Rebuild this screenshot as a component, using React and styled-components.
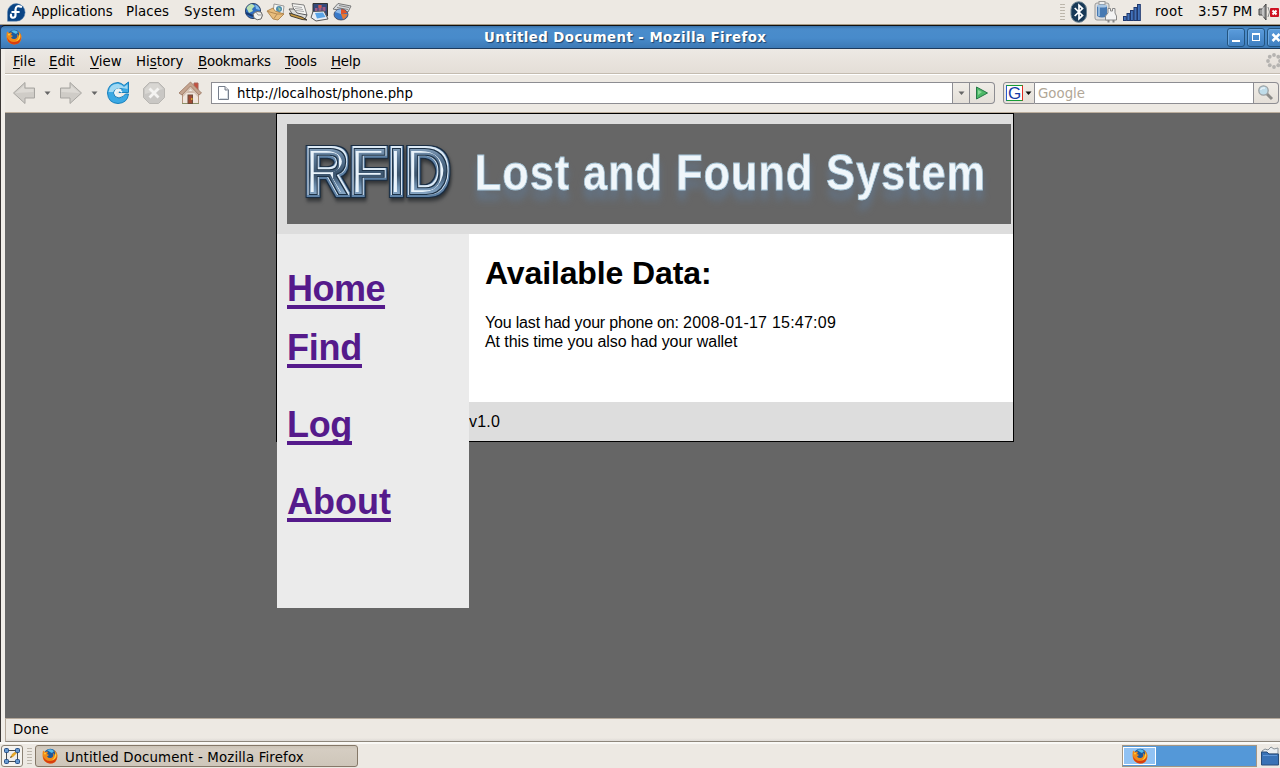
import React from "react";
import styled, { createGlobalStyle } from "styled-components";

const Global = createGlobalStyle`
  * { box-sizing: border-box; }
  html, body { margin: 0; width: 1280px; height: 768px; overflow: hidden; background: #ede9e3; }
  body { font-family: "DejaVu Sans", sans-serif; font-size: 13.33px; color: #000; }
  svg { display: block; flex: none; }
`;
const Desktop = styled.div`width: 1280px; height: 768px; display: flex; flex-direction: column; overflow: hidden;`;
const Label = styled.span`
  white-space: nowrap; flex: none; line-height: 16px;
  width: ${p => p.$w ? p.$w + "px" : "auto"};
  letter-spacing: ${p => p.$ls || 0}px;
  margin-left: ${p => p.$ml || 0}px;
  padding-top: ${p => p.$pt || 0}px;
  color: ${p => p.$color || "inherit"};
  u { text-underline-offset: 2px; text-decoration-thickness: 1px; text-decoration-skip-ink: none; }
`;
const TopPanel = styled.div`
  height: 25px; flex: none; display: flex; align-items: center; padding: 0 0 0 6px;
  background: #ede9e3; border-bottom: 1px solid #a89c86;
`;
const Tray = styled.div`margin-left: auto; display: flex; align-items: center; height: 24px;`;
const Launchers = styled.div`display: flex; gap: 2px; margin-left: 8px;`;
const Grip = styled.div`
  width: 5px; height: 18px; margin-left: ${p => p.$ml || 0}px; margin-right: ${p => p.$mr || 0}px;
  background-image: radial-gradient(circle, #b7b1a6 0.8px, transparent 1px); background-size: 2.5px 3px;
`;
const Window = styled.div`
  flex: 1; min-height: 0; display: flex; flex-direction: column; background: #183c78;
`;
const TitleBar = styled.div`
  height: 24px; flex: none; display: flex; align-items: center; padding-left: 5px; overflow: hidden;
  border: solid #1d3a5c; border-width: 1px 0 1px 1px; border-top-color: #111; border-top-left-radius: 5px;
  background: linear-gradient(#3a72a8 0, #4a8ccb 3px, #488bcb 12px, #3c79b5 100%);
`;
const Title = styled.div`
  width: 283px; margin-left: 462px; padding-top: 1px; font-size: 13.33px; font-weight: bold; line-height: 16px; color: #fff;
  white-space: nowrap; text-shadow: 1px 1px 1px #1d436c; letter-spacing: 0.44px; flex: none;
`;
const WindowButtons = styled.div`display: flex; gap: 2px; margin-left: 460px; flex: none;`;
const WinButton = styled.div`
  width: 18px; height: 19px; flex: none; border: 1px solid #23547f; border-radius: 3px;
  background: linear-gradient(#5b9cdc, #3f7fc0); box-shadow: inset 1px 1px 0 #6ba7df;
`;
const Frame = styled.div`
  flex: 1; min-height: 0; display: flex; flex-direction: column;
  border-left: 1px solid #3a3635; padding-left: 4px; background: #f1eee9;
`;
const MenuBar = styled.div`
  height: 25px; flex: none; display: flex; align-items: center; padding-left: 8px;
  background: linear-gradient(#ede9e4, #e4ded7); border-bottom: 1px solid #c4bcb0;
`;
const ToolBar = styled.div`
  height: 39px; flex: none; display: flex; align-items: center; padding: 0 0 1px 7px;
  background: #ede9e3; border-top: 1px solid #fff; border-bottom: 1px solid #bcae9d;
`;
const UrlField = styled.div`
  width: 742px; height: 22px; margin-left: 9px; display: flex; align-items: center; padding-left: 5px;
  background: #fff; border: 1px solid #8d8d92; flex: none;
`;
const FieldButton = styled.div`
  height: 22px; width: ${p => p.$w}px; flex: none; display: flex; align-items: center; justify-content: center;
  background: linear-gradient(#f0ede7, #e4dfd8); border: 1px solid #8d8d92; border-left-width: ${p => p.$first ? 1 : 0}px;
  border-radius: ${p => p.$first ? "3px 0 0 3px" : p.$last ? "0 4px 4px 0" : 0};
  margin-left: ${p => p.$ml || 0}px;
`;
const SearchField = styled.div`
  width: 219px; height: 22px; background: #fff; border: solid #8d8d92; border-width: 1px 1px 1px 0;
  display: flex; align-items: center; padding-left: 3px; flex: none;
`;
const Viewport = styled.div`flex: 1; min-height: 0; background: #666; overflow: hidden; padding-left: 271px;
  font-family: "Liberation Sans", Arial, sans-serif; font-size: 16px;`;
const Page = styled.div`width: 738px; height: 329px; border: 1px solid #000; background: #ddd;`;
const Header = styled.div`height: 120px; padding: 10px 2px 10px 10px;`;
const Columns = styled.div`display: flex; height: 207px; align-items: flex-start;`;
const Side = styled.nav`width: 192px; height: 374px; flex: none; background: #ebebeb; padding: 34px 10px 0; position: relative;`;
const NavItem = styled.a`
  display: block; width: max-content; height: 41px; line-height: 41px; margin-bottom: ${p => p.$gap}px;
  font-size: 36px; font-weight: bold; color: #551a8b; letter-spacing: ${p => p.$ls || 0}px;
  text-decoration: underline; text-decoration-thickness: 4px; text-underline-offset: 4px; text-decoration-skip-ink: none;
`;
const Main = styled.main`flex: 1;`;
const Article = styled.section`height: 168px; background: #fff; padding: 21px 16px 0;`;
const Heading = styled.h1`margin: 0; font-size: 32px; line-height: 37px; letter-spacing: -0.12px; white-space: nowrap;`;
const Para = styled.p`margin: ${p => p.$mt || 0}px 0 0; line-height: 19px; letter-spacing: ${p => p.$ls || 0}px; white-space: nowrap;`;
const Early = styled.span`letter-spacing: -0.18px;`;
const Footer = styled.footer`height: 39px; line-height: 39px; letter-spacing: 0.2px;`;
const StatusBar = styled.div`
  height: 24px; flex: none; border: solid #b5a99b; border-width: 1px 0 1px 1px; border-bottom-color: #8e877c;
  background: linear-gradient(#ede9e3 19px, #dedad6); display: flex; align-items: center; padding-left: 7px;
`;
const BottomPanel = styled.div`
  height: 26px; flex: none; background: #ede9e3; border-top: 2px solid #faf9f6;
  display: flex; align-items: center; padding-left: 1px;
`;
const DesktopButton = styled.div`width: 22px; height: 22px; border: 1px solid #8b8274; border-radius: 3px; background: #f5f3ef; padding: 2px; flex: none;`;
const TaskButton = styled.div`
  width: 323px; height: 22px; margin-left: 3px; border: 1px solid #857868; border-radius: 3px;
  background: linear-gradient(#cbc3b7, #d5cdc2 4px, #cec6ba); display: flex; align-items: center; padding-left: 6px;
`;
const Pager = styled.div`width: 135px; height: 22px; margin-left: auto; background: #5498d8; border: 1px solid #a39684; padding: 1px 0 1px 0;`;
const Workspace = styled.div`width: 33px; height: 18px; border: 1px solid #fff; background: #91c2f3; display: flex; justify-content: center; align-items: center;`;

const Firefox = ({ s = 16 }) => (
  <svg width={s} height={s} viewBox="0 0 16 16">
    <circle cx="8.3" cy="7.6" r="6.8" fill="#1d5a9c" />
    <path d="M5 2Q9 0 12 3L10 5L8 4Z" fill="#58bce8" />
    <path d="M1 2.5L3 4Q5 3 6 4L5 6L7 7L5 8.5Q7 11 10 9.5Q12 8 11 5Q13 6 13 8Q14 5 12 2Q16 5 15.5 9Q14.5 15.5 8 15.5Q1 15 .5 8Q.4 5 1 2.5Z" fill="#f08a18" />
    <path d="M1 8Q3 13 8 13Q13 13 15 8Q15 15.5 8 15.5Q1.5 15 1 8Z" fill="#d83e10" />
    <path d="M13 4Q15 7 13.5 10Q12 12 10 12Q14 9 13 4ZM2 5Q3 4.5 4 5L3 7Z" fill="#ffd83c" />
  </svg>
);
const Fedora = () => (
  <svg width="20" height="20" viewBox="0 0 20 20">
    <path d="M1.500 19.200V10A8.800 8.800 0 1 1 10.300 19.200Z" fill="#0a4484" stroke="#5f88b4" strokeWidth=".5" />
    <path d="M15 4.800Q10 2.600 9.500 7.500V13Q9.500 16 6.500 15.700Q4.500 15 5 12.600M6.300 10H12.800" stroke="#fff" strokeWidth="2.200" fill="none" strokeLinecap="round" />
  </svg>
);
const Globe = () => (
  <svg width="20" height="20" viewBox="0 0 20 20">
    <circle cx="9" cy="9" r="7.600" fill="#2f6dc0" stroke="#30466a" />
    <path d="M2.500 6Q5 2 8 2L11 4L8 7L9 9L5 11Z" fill="#b9e0b4" /><path d="M11 2.500Q15 4 16 8L12 7Z" fill="#7cb9ee" />
    <path d="M2 11L9 14" fill="none" stroke="#173a74" strokeWidth="2" />
    <path d="M9 12Q12 8 17 10Q20 13 17 17Q13 19 10 16Z" fill="#f2f2f0" stroke="#666" /><path d="M12 10L14 13L18 13" fill="none" stroke="#999" />
  </svg>
);
const Mail = () => (
  <svg width="20" height="20" viewBox="0 0 20 20">
    <path d="M8 2L18 4L17 12L7 11Z" fill="#f5f6f2" stroke="#999" /><circle cx="13" cy="7" r="3" fill="#4d8caf" /><path d="M12 5L15 7L13 9Z" fill="#9bc79a" />
    <path d="M1 9L7 6L9 9L18 12L12 18L7 17Z" fill="#e8bd7c" stroke="#a57840" strokeWidth=".8" /><path d="M2 9.500L11 12L18 12M11 12L8 16.500" fill="none" stroke="#b58a52" />
  </svg>
);
const Papers = () => (
  <svg width="20" height="20" viewBox="0 0 20 20">
    <path d="M4 1.500L16 3L19 13L7 12Z" fill="#f5f5f3" stroke="#666" strokeWidth=".8" /><path d="M6 4.500L14 5.500M7 6.500L15 7.500M8 8.500L16 9.500" stroke="#aaa" />
    <path d="M1 7L6 7L9 11L19 13L17 17L5 13Z" fill="#dcdcda" stroke="#444" strokeWidth=".8" /><path d="M1.500 11L14 15L19 18L14 17.500L2.500 14Z" fill="#c89b45" stroke="#222" strokeWidth=".8" />
  </svg>
);
const Present = () => (
  <svg width="20" height="20" viewBox="0 0 20 20">
    <path d="M3 1.500H17.500V14H3Z" fill="#34497a" stroke="#333" /><path d="M5 10V6H7.500V10ZM8.500 10V3H11.500V10ZM12.500 9V5H15.500V9Z" fill="#9a5b87" /><path d="M8.500 3H11.500V6H8.500Z" fill="#ca594a" />
    <path d="M3 9.500L14 9L18 17L6 19L1 15.500Z" fill="#e8edf4" stroke="#555" /><path d="M5 11L13 10.500L15.500 15L7 16.500Z" fill="#5aa4e6" />
  </svg>
);
const Chart = () => (
  <svg width="20" height="20" viewBox="0 0 20 20">
    <path d="M6 1.500L19 4L16 10L1 7Z" fill="#d7dadd" stroke="#777" /><path d="M7 3.500L17 5.500M5 5.500L16 7.500" stroke="#888" />
    <ellipse cx="9" cy="12.500" rx="7" ry="5.500" fill="#3979c8" stroke="#445" strokeWidth=".8" /><path d="M9 12V7.300Q14 7.500 15 11Z" fill="#e45426" /><path d="M9 12L3 10Q5 7 9 7.300Z" fill="#90baea" /><path d="M9 12L15.500 12Q14.500 16 11 17.300Z" fill="#e77835" />
  </svg>
);
const Bluetooth = () => (
  <svg width="18" height="22" viewBox="0 0 18 22">
    <rect x="1" y=".8" width="15.500" height="20.500" rx="7.700" fill="#183957" stroke="#6b8190" /><path d="M4.700 7L12.500 14.500L9 17.700V4.300L12.500 7.500L4.700 15" fill="none" stroke="#fff" strokeWidth="1.700" />
  </svg>
);
const Battery = () => (
  <svg width="24" height="22" viewBox="0 0 24 22">
    <rect x="1" y="2" width="14" height="17" rx="2" fill="#ddd" stroke="#999" /><rect x="5" y=".5" width="6" height="3" fill="#eee" stroke="#999" />
    <path d="M3 5Q8 2 13 5V15Q8 18 3 15Z" fill="#4779b2" /><path d="M5 5V15" stroke="#8eb5db" strokeWidth="2" /><ellipse cx="8" cy="5" rx="5" ry="1.500" fill="#a8c6e3" />
    <path d="M14 12V7.500H16.500V10H18.500V7.500H21V12L22.500 15V19H11.500V15Z" fill="#f3f3f3" stroke="#888" /><path d="M14.500 19V21.500M19.500 19V21.500" stroke="#888" strokeWidth="2" />
  </svg>
);
const Signal = () => (
  <svg width="18" height="17" viewBox="0 0 18 17">
    {[0, 1, 2, 3, 4].map(i => <rect key={i} x={.5 + i * 3.500} y={12.500 - i * 3} width="2.800" height={4 + i * 3} fill="#4272ba" stroke="#1f386d" />)}
  </svg>
);
const Speaker = () => (
  <svg width="22" height="20" viewBox="0 0 22 20">
    <path d="M1 7H4L8 2V18L4 13H1Z" fill="#999" stroke="#444" /><path d="M5 5V15" stroke="#eee" /><path d="M10 5Q13 10 10 15" fill="none" stroke="#888" />
    <rect x="12" y="6" width="9" height="9" rx="1" fill="#ce1221" /><path d="M14.500 8.500L18.500 12.500M18.500 8.500L14.500 12.500" stroke="#fff" strokeWidth="2" />
  </svg>
);
const Arrow = ({ right }) => (
  <svg width="24" height="24" viewBox="0 0 24 24">
    <g transform={right ? "translate(24 0) scale(-1 1)" : undefined}><path d="M1.500 12L13 1.500V7H22.500V17H13V22.500Z" fill="#cfccc7" stroke="#a7a5a1" /><path d="M3.500 12L12 4.500V8H21.500V11Z" fill="#dddad5" /></g>
  </svg>
);
const Caret = ({ dark }) => <svg width="7" height="5" viewBox="0 0 7 5"><path d="M.5.5H6.500L3.500 4Z" fill={dark ? "#111" : "#666"} /></svg>;
const NavCaret = styled.span`display: flex; margin: 0 ${p => p.$r}px 0 8px;`;
const Reload = () => (
  <svg width="24" height="24" viewBox="0 0 24 24">
    <path d="M18 4.500L22.500 1V11.500H13L16.500 8Q12.500 5.500 9 8Q6 12 9 15.500Q13 18.500 17 15.500L19.500 13H22.500Q21.500 22 12 22.500Q2 22 1.500 12Q2 2 12 1.500Q15.500 2 18 4.500Z" fill="#3ba9e4" stroke="#1780bd" />
    <path d="M2.500 11Q4 2.800 12 2.800Q16 3.500 18 6L21.500 3.500V8Q10 5 7 11Z" fill="#a1d9f3" /><path d="M9 12Q10 8.500 14 9.500L16 11M9 12Q10 15.500 15 14" stroke="#e8f7ff" strokeWidth="1.600" fill="none" />
  </svg>
);
const Stop = () => (
  <svg width="24" height="24" viewBox="0 0 24 24">
    <path d="M7.500 1.500H16.500L22.500 7.500V16.500L16.500 22.500H7.500L1.500 16.500V7.500Z" fill="#c9c7c4" stroke="#b8b6b2" /><path d="M8 2.500H16L21 8L3 13V8Z" fill="#d8d6d2" />
    <path d="M7.500 7.500L16.500 16.500M16.500 7.500L7.500 16.500" stroke="#f4f3f1" strokeWidth="2.800" />
  </svg>
);
const Home = () => (
  <svg width="24" height="24" viewBox="0 0 24 24">
    <path d="M16 2H20V9H16Z" fill="#c8503f" stroke="#a5645a" /><path d="M4.500 11H20.500V22.500H4.500Z" fill="#f0e5dc" stroke="#b3927c" />
    <path d="M5 12L12.500 5L20 12V16L12.500 8L5 16Z" fill="#d6c3b4" /><path d="M1 12L12.500 1L23.500 12L21 14L12.500 5L4 14Z" fill="#c4a48f" stroke="#9a7662" strokeWidth=".8" />
    <rect x="10" y="14" width="4.500" height="8.500" fill="#a04a34" stroke="#6d4c3b" /><path d="M13 18H14.500" stroke="#f2c52e" strokeWidth="1.500" /><path d="M4 22.500H9M15 22.500H21" stroke="#8b926a" />
  </svg>
);
const PageIcon = () => <svg width="13" height="16" viewBox="0 0 13 16"><path d="M1.500 1.500H8L11.500 5V14.500H1.500Z" fill="#fff" stroke="#777f8c" /><path d="M8 1.500V5H11.500" fill="#ddd" stroke="#777f8c" /><path d="M3 13.500H11M10.500 6V13" stroke="#d4dbe1" /></svg>;
const Play = () => <svg width="14" height="14" viewBox="0 0 14 14"><path d="M1.500 1L12.500 7L1.500 13Z" fill="#4eb967" stroke="#267947" /><path d="M3 4L7 6L3 9Z" fill="#8bd898" /></svg>;
const GoogleBadge = styled.div`
  width: 17px; height: 16px; background: #fff; border: 1px solid; border-color: #169c35 #e12b20 #169c35 #2859d0; margin-right: 2px;
  color: #173ba5; font: 17px/15px "Liberation Sans", sans-serif; text-align: center; flex: none;
`;
const Magnifier = () => <svg width="18" height="18" viewBox="0 0 18 18"><path d="M9.500 9.500L15 15" stroke="#8c8c89" strokeWidth="3" /><circle cx="6.500" cy="6.500" r="4.700" fill="#bfdce9" stroke="#9ba1a3" strokeWidth="1.300" /><path d="M3.500 6Q5 3 8 4" stroke="#fff" fill="none" /></svg>;
const Throbber = () => (
  <svg width="16" height="16" viewBox="0 0 16 16">
    {[0, 1, 2, 3, 4, 5, 6, 7].map(i => <circle key={i} cx={8 + 6 * Math.cos(i * Math.PI / 4)} cy={8 + 6 * Math.sin(i * Math.PI / 4)} r="1.900" fill="#b5b3b0" />)}
  </svg>
);
const ShowDesktop = () => (
  <svg width="16" height="16" viewBox="0 0 16 16">
    <rect x="2.500" y="2.500" width="11" height="11" fill="#eee" stroke="#454b50" /><path d="M6 10L8 6L12 3L13 5L9 9Z" fill="#e5a629" /><path d="M6 10L7 8L8 9Z" fill="#333" />
    {[[0, 0], [11, 0], [0, 11], [11, 11]].map(([x, y]) => <rect key={x + "-" + y} x={x + .5} y={y + .5} width="4" height="4" rx="1" fill="#6798cf" stroke="#244f86" />)}
  </svg>
);
const Trash = () => <svg width="20" height="20" viewBox="0 0 20 20"><path d="M2 5L5 3L8 4L11 1L14 3L18 2V8H2Z" fill="#e9edf0" stroke="#8a9298" /><path d="M1.500 6H7L9 8H18.500V19H1.500Z" fill="#3972b6" stroke="#294d7a" /><path d="M3 9.500H17" stroke="#5f95d6" /></svg>;

const Banner = () => (
  <svg width="724" height="100" viewBox="0 0 724 100" fontFamily="Liberation Sans, Arial, sans-serif" fontWeight="bold">
    <defs>
      <linearGradient id="steel" x1="0" y1="0" x2="0" y2="1">
        <stop offset=".1" stopColor="#a9c3dc" /><stop offset=".35" stopColor="#5b7896" /><stop offset=".55" stopColor="#3c556e" /><stop offset=".7" stopColor="#6f90b0" /><stop offset=".9" stopColor="#a4c0dc" />
      </linearGradient>
      <filter id="chrome" x="-10%" y="-20%" width="125%" height="150%" colorInterpolationFilters="sRGB">
        <feMorphology in="SourceAlpha" operator="dilate" radius="3" result="d3" />
        <feGaussianBlur in="d3" stdDeviation="2" result="sb" />
        <feOffset in="sb" dx="1" dy="3" result="so" />
        <feFlood floodColor="#1b1e22" floodOpacity=".75" /><feComposite in2="so" operator="in" result="shadow" />
        <feGaussianBlur in="d3" stdDeviation=".7" result="d3s" />
        <feFlood floodColor="#1a2d42" /><feComposite in2="d3s" operator="in" result="edge" />
        <feMorphology in="SourceAlpha" operator="dilate" radius="2" result="d2" />
        <feFlood floodColor="#5f82a6" /><feComposite in2="d2" operator="in" result="rim" />
        <feMorphology in="SourceAlpha" operator="dilate" radius="1" result="d1" />
        <feOffset in="d1" dx="0" dy="-1" result="d1o" />
        <feFlood floodColor="#dceaf6" /><feComposite in2="d1o" operator="in" result="light" />
        <feOffset in="SourceAlpha" dx="0" dy="0" result="base" />
        <feFlood floodColor="#1d3247" /><feComposite in2="base" operator="in" result="dark" />
        <feMorphology in="SourceGraphic" operator="erode" radius="1" result="body" />
        <feMorphology in="SourceAlpha" operator="erode" radius="3" result="e3" />
        <feOffset in="e3" dx="-1" dy="0" result="e3o" />
        <feFlood floodColor="#e9f3fb" /><feComposite in2="e3o" operator="in" result="core" />
        <feMerge result="letters"><feMergeNode in="edge" /><feMergeNode in="rim" /><feMergeNode in="light" /><feMergeNode in="dark" /><feMergeNode in="body" /><feMergeNode in="core" /></feMerge>
        <feGaussianBlur in="letters" stdDeviation=".35" result="smooth" />
        <feMerge><feMergeNode in="shadow" /><feMergeNode in="smooth" /></feMerge>
      </filter>
      <filter id="glow" x="-5%" y="-30%" width="110%" height="200%" colorInterpolationFilters="sRGB">
        <feDropShadow dx="0" dy="9" stdDeviation="4.500" floodColor="#5f84b0" floodOpacity=".45" />
      </filter>
    </defs>
    <rect width="724" height="100" fill="#666" />
    <text transform="translate(17.500 70.500) scale(.905 1)" fontSize="69" fill="url(#steel)" filter="url(#chrome)">RFID</text>
    <text transform="translate(187.800 66) scale(.87 1)" fontSize="50" letterSpacing="1" fill="#f0f6fa" stroke="#a4c5d8" strokeWidth=".8" filter="url(#glow)">Lost and Found System</text>
  </svg>
);

export default function App() {
  return (
    <Desktop>
      <Global />
      <TopPanel>
        <Fedora />
        <Label $ml={6} $w={94} $ls={-0.07}>Applications</Label>
        <Label $w={58} $ls={0.1}>Places</Label>
        <Label $w={52} $ls={0.3}>System</Label>
        <Launchers><Globe /><Mail /><Papers /><Present /><Chart /></Launchers>
        <Tray>
          <Grip $mr={5} /><Bluetooth />
          <Label $ml={6}><Battery /></Label><Label $ml={5}><Signal /></Label>
          <Label $ml={14} $w={43} $ls={0.3}>root</Label>
          <Label $w={60} $ls={0.1}>3:57 PM</Label>
          <Speaker />
        </Tray>
      </TopPanel>
      <Window>
        <TitleBar>
          <Firefox />
          <Title>Untitled Document - Mozilla Firefox</Title>
          <WindowButtons>
            <WinButton><svg width="16" height="17"><path d="M4 12H12" stroke="#fff" strokeWidth="2" /></svg></WinButton>
            <WinButton><svg width="16" height="17"><rect x="4.500" y="5.500" width="7" height="6" fill="none" stroke="#fff" /><path d="M4 5H12" stroke="#fff" strokeWidth="2" /></svg></WinButton>
            <WinButton><svg width="16" height="17"><path d="M4.500 5L11.500 12M11.500 5L4.500 12" stroke="#fff" strokeWidth="2.500" /></svg></WinButton>
          </WindowButtons>
        </TitleBar>
        <Frame>
          <MenuBar>
            <Label $pt={1} $w={36} $ls={0.1}><u>F</u>ile</Label>
            <Label $pt={1} $w={41}><u>E</u>dit</Label>
            <Label $pt={1} $w={46}><u>V</u>iew</Label>
            <Label $pt={1} $w={62}>Hi<u>s</u>tory</Label>
            <Label $pt={1} $w={87} $ls={-0.2}><u>B</u>ookmarks</Label>
            <Label $pt={1} $w={46} $ls={-0.2}><u>T</u>ools</Label>
            <Label $pt={1} $w={935} $ls={-0.2}><u>H</u>elp</Label>
            <Throbber />
          </MenuBar>
          <ToolBar>
            <Arrow /><NavCaret $r={8}><Caret /></NavCaret>
            <Arrow right /><NavCaret $r={8}><Caret /></NavCaret>
            <Reload /><Label $ml={12}><Stop /></Label><Label $ml={12}><Home /></Label>
            <UrlField><PageIcon /><Label $pt={2} $ml={7} $ls={-0.02}>http://localhost/phone.php</Label></UrlField>
            <FieldButton $w={17}><Caret /></FieldButton>
            <FieldButton $w={25} $last><Play /></FieldButton>
            <FieldButton $w={32} $first $ml={8}><GoogleBadge>G</GoogleBadge><Caret dark /></FieldButton>
            <SearchField><Label $pt={2} $color="#b1a797">Google</Label></SearchField>
            <FieldButton $w={25} $last><Magnifier /></FieldButton>
          </ToolBar>
          <Viewport>
            <Page>
              <Header><Banner /></Header>
              <Columns>
                <Side>
                  <NavItem $gap={18} $ls={-0.5}>Home</NavItem>
                  <NavItem $gap={36} $ls={-0.25}>Find</NavItem>
                  <NavItem $gap={36} $ls={-0.33}>Log</NavItem>
                  <NavItem $gap={0}>About</NavItem>
                </Side>
                <Main>
                  <Article>
                    <Heading>Available Data:</Heading>
                    <Para $mt={21} $ls={0.23}><Early>You last had your phone on: </Early>2008-01-17 15:47:09</Para>
                    <Para $ls={-0.08}>At this time you also had your wallet</Para>
                  </Article>
                  <Footer>v1.0</Footer>
                </Main>
              </Columns>
            </Page>
          </Viewport>
          <StatusBar><Label $ls={0.2}>Done</Label></StatusBar>
        </Frame>
      </Window>
      <BottomPanel>
        <DesktopButton><ShowDesktop /></DesktopButton>
        <Grip $ml={4} />
        <TaskButton><Firefox /><Label $ml={7} $pt={3} $ls={0.15}>Untitled Document - Mozilla Firefox</Label></TaskButton>
        <Pager><Workspace><Firefox /></Workspace></Pager>
        <Label $ml={3}><Trash /></Label>
      </BottomPanel>
    </Desktop>
  );
}
